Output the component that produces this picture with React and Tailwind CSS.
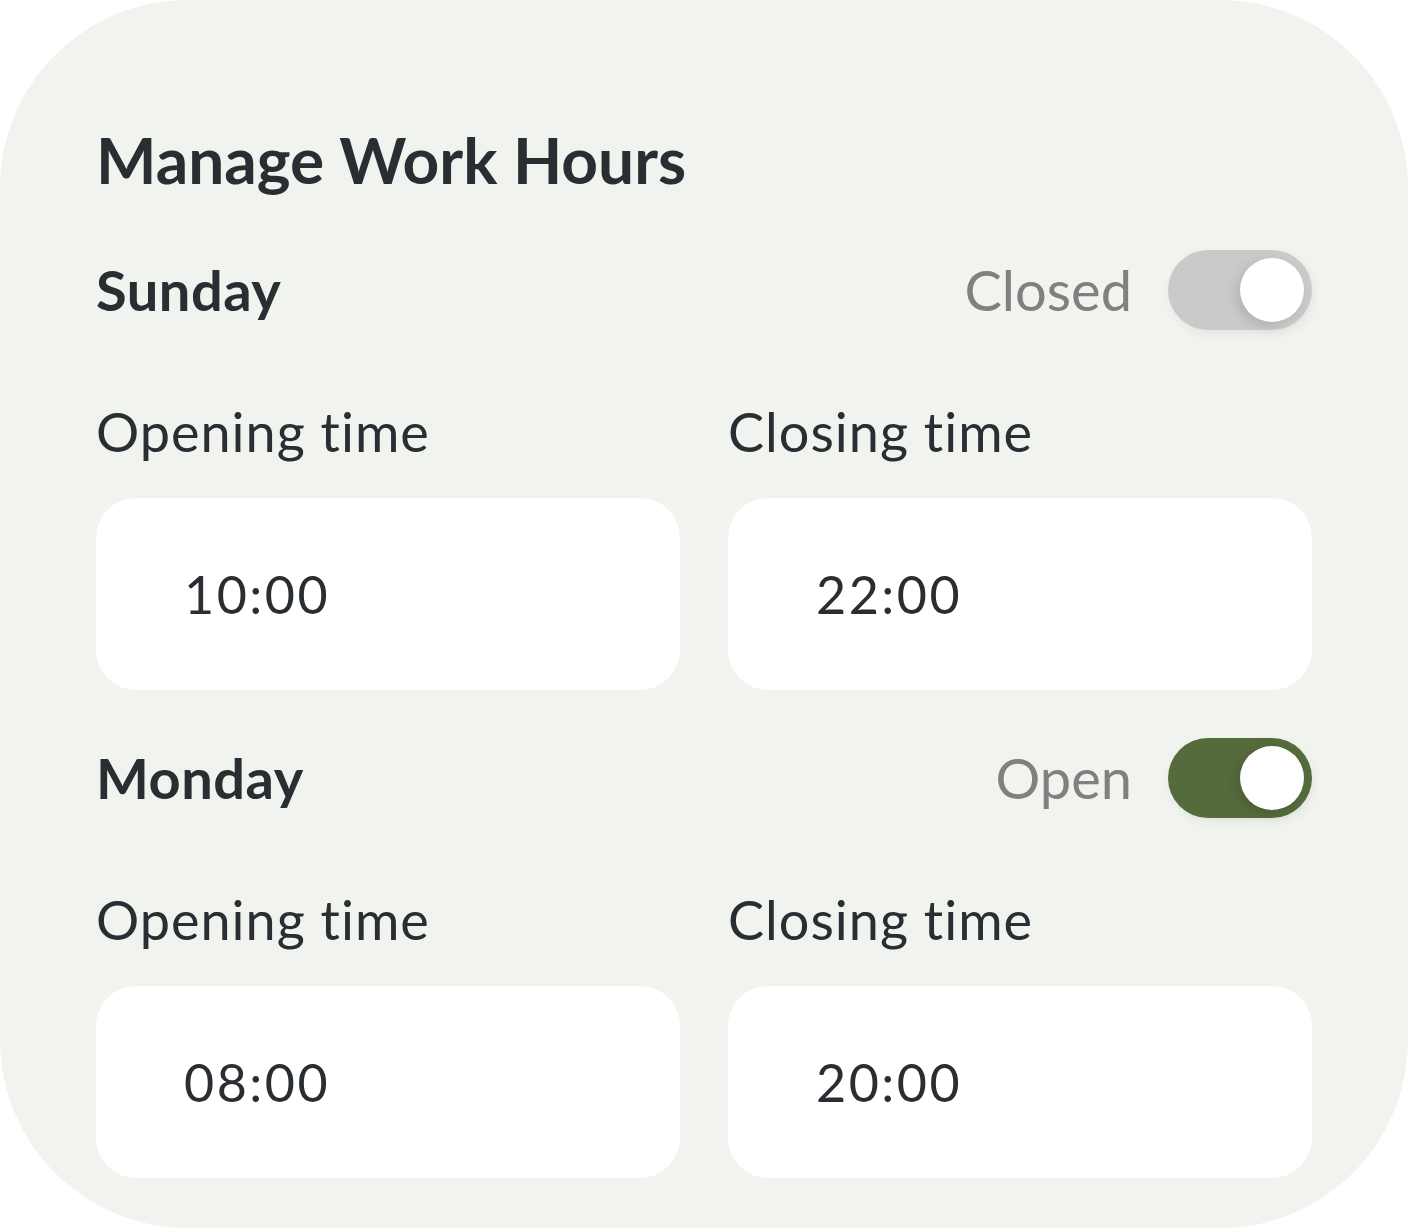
import React from "react";

const days = [
  { name: "Sunday", status: "Closed", on: false, open: "10:00", close: "22:00" },
  { name: "Monday", status: "Open", on: true, open: "08:00", close: "20:00" },
];

function Toggle({ on }) {
  return (
    <div
      className={
        "flex h-[80px] w-[144px] items-center justify-end rounded-full pr-[8px] shadow-[2px_4px_10px_rgba(0,0,0,0.06)] " +
        (on ? "bg-[#566b3c]" : "bg-[#cacaca]")
      }
    >
      <div className="h-[64px] w-[64px] rounded-full bg-white shadow-[-4px_4px_12px_rgba(0,0,0,0.12)]" />
    </div>
  );
}

function TimeBox({ label, value }) {
  return (
    <div className="flex flex-col">
      <div className="flex h-[68px] items-center pb-[2px] text-[54px] font-normal tracking-[1px] text-[#2a2d32]">{label}</div>
      <div className="mt-[32px] flex h-[192px] items-center rounded-[40px] bg-white pl-[88px] text-[52px] tracking-[2.5px] text-[#2a2d32]">
        {value}
      </div>
    </div>
  );
}

export default function App() {
  return (
    <div className="h-[1228px] w-[1408px] bg-white" style={{ fontFamily: "Lato, 'Noto Sans', sans-serif" }}>
      <div className="flex h-full w-full flex-col rounded-[188px] bg-[#f1f3ef] px-[96px] pt-[128px]">
        <h1 className="flex h-[64px] items-center text-[64px] font-bold leading-none text-[#2a2d32]">
          Manage Work Hours
        </h1>
        <div className="mt-[58px] flex flex-col gap-[48px]">
          {days.map((d) => (
            <section key={d.name} className="flex flex-col">
              <div className="flex h-[80px] items-center justify-between">
                <span className="text-[56px] font-bold tracking-[0.5px] text-[#2a2d32]">{d.name}</span>
                <div className="flex items-center gap-[36px]">
                  <span className="text-[56px] text-[#808080]">{d.status}</span>
                  <Toggle on={d.on} />
                </div>
              </div>
              <div className="mt-[68px] grid grid-cols-2 gap-[48px]">
                <TimeBox label="Opening time" value={d.open} />
                <TimeBox label="Closing time" value={d.close} />
              </div>
            </section>
          ))}
        </div>
      </div>
    </div>
  );
}
